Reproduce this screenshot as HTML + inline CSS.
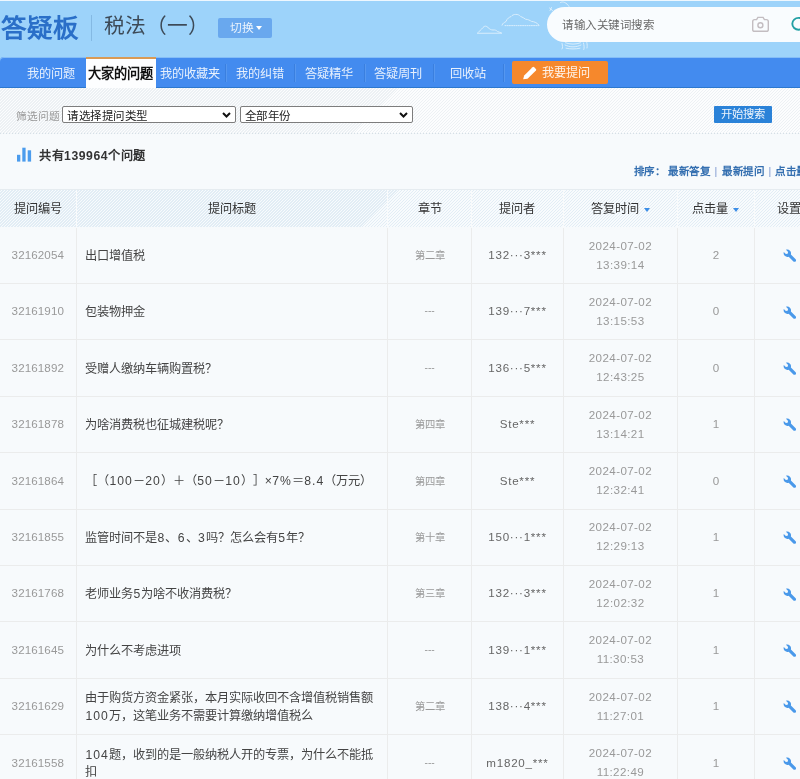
<!DOCTYPE html>
<html lang="zh-CN">
<head>
<meta charset="utf-8">
<title>答疑板</title>
<style>
*{box-sizing:border-box;margin:0;padding:0}
html,body{width:800px;height:779px;overflow:hidden}
#wrap{position:absolute;left:0;top:0;width:800px;height:779px;overflow:hidden;will-change:transform}
body{text-spacing-trim:space-all;font-family:"Liberation Sans",sans-serif;background:#f7fafc;color:#333;position:relative;font-size:12.2px}
#top{position:absolute;left:0;top:0;width:800px;height:70px;background:#9dd3fa;border-top:1px solid #eef7fe}
#logo{position:absolute;left:0.5px;top:10px;font-size:25.5px;font-weight:bold;color:#2a6fc8;line-height:34px;white-space:nowrap;letter-spacing:0}
#sep{position:absolute;left:91px;top:14px;width:1px;height:26px;background:#84b9e3}
#course{position:absolute;left:103.5px;top:9px;font-size:20.7px;color:#3d4a57;line-height:32px;white-space:nowrap}
#sw{position:absolute;left:217.5px;top:17px;width:54px;height:19.6px;background:#69a8ee;border-radius:2px;color:rgba(255,255,255,.86);font-size:11.8px;line-height:20px;text-align:left;padding-left:12px;white-space:nowrap}
#sw i{position:absolute;left:38.5px;top:8px;border:3.5px solid transparent;border-top:4px solid #fff;border-bottom:0}
#search{position:absolute;left:547px;top:6px;width:300px;height:35px;border-radius:17.5px;background:#f9fcfe}
#search span{position:absolute;left:15.3px;top:2px;line-height:33px;font-size:11.5px;letter-spacing:.5px;color:#6a6a6a;white-space:nowrap}
#nav{position:absolute;left:0;top:57px;width:800px;height:31px;background:#438bef;border-bottom:1px solid #2c78cf;border-top-left-radius:4px;box-shadow:inset 0 1px 0 #84bdf7}
#nav .t{position:absolute;top:0;height:30px;line-height:35px;color:rgba(255,255,255,.88);font-size:12.2px;text-align:center;white-space:nowrap}
#nav .sp{position:absolute;top:7px;width:1px;height:18px;background:#3a7fdf;box-shadow:1px 0 0 #5597f0}
#nav .act{position:absolute;left:86.4px;top:0;width:69.6px;height:32px;background:#fdfeff;border-top:2px solid #d99a55;color:#111;font-weight:bold;font-size:13.2px;line-height:30px;text-align:center;text-indent:-2px;white-space:nowrap}
#ask{position:absolute;left:512px;top:4px;width:96px;height:23px;background:#f6882c;border-radius:2px;color:rgba(255,255,255,.9);font-size:12.2px;line-height:25px;white-space:nowrap}
#ask span{position:absolute;left:30px;top:0}
#filter{position:absolute;left:0;top:88px;width:800px;height:46px;background:repeating-linear-gradient(135deg,#edf1f4 0,#edf1f4 .75px,#fcfdfe .75px,#fcfdfe 2.121px)}
#filter:after{content:"";position:absolute;left:0;bottom:0;width:800px;height:1px;background:repeating-linear-gradient(90deg,#d5dfe6 0,#d5dfe6 1.5px,#f4f7f9 1.5px,#f4f7f9 3px)}
#filter .lb{position:absolute;left:16px;top:21px;font-size:10.7px;color:#999;line-height:14px;white-space:nowrap}
.sel{position:absolute;top:18.4px;height:17px;border:1px solid #7d7d7d;border-radius:2px;background:#fff;font-size:11.5px;letter-spacing:.5px;line-height:15px;padding-top:2px;color:#222;padding-left:4px;white-space:nowrap}
.sel svg{position:absolute;right:4px;top:5px}
#go{position:absolute;left:713.6px;top:18.3px;width:58.6px;height:17px;background:#2a82d8;color:rgba(255,255,255,.92);font-size:11.3px;line-height:17.5px;text-align:center;border-radius:1px;white-space:nowrap}
#cnt{position:absolute;left:39px;top:148px;font-size:12.2px;font-weight:bold;color:#333;line-height:16px;white-space:nowrap;letter-spacing:.55px}
#bars{position:absolute;left:16.8px;top:146.8px}
#sort{position:absolute;left:0;top:164px;font-size:10.5px;letter-spacing:.6px;color:#346fb0;line-height:14px;white-space:nowrap;font-weight:bold}
#sort span{position:absolute;top:0}
#thead{position:absolute;left:0;top:189px;width:800px;height:38.4px;border-top:1px solid #e6ecf0;
 background:repeating-linear-gradient(135deg,#e2edf5 0,#e2edf5 .75px,#f8fbfd .75px,#f8fbfd 2.121px)}
#thead .h{position:absolute;top:0;height:37.4px;line-height:38px;text-align:center;font-size:12.2px;color:#333;border-right:1px solid #f9fbfc;white-space:nowrap}
#thead .h.last{text-align:left;padding-left:22.5px;border-right:0}
.ar{display:inline-block;margin-left:5px;vertical-align:1px;border:3px solid transparent;border-top:4px solid #3b8de6;border-bottom:0}
.row{position:absolute;left:0;width:800px;border-bottom:1px solid #ebecec}
.c{position:absolute;top:0;height:100%;padding-bottom:1.6px;display:flex;align-items:center;justify-content:center;border-right:1px solid #ebecec;text-align:center}
.c.id{color:#999;font-size:11.6px;letter-spacing:.1px}
.c.ti{justify-content:flex-start;text-align:left;padding-left:8.5px;padding-top:4px;color:#444;font-size:12.2px;line-height:17.4px}
.n{font-weight:normal;letter-spacing:.95px;margin-left:.5px}
.c.ch{color:#999;font-size:10.3px}
.c.us{color:#666;font-size:11.6px;letter-spacing:.75px}
.c.dt{color:#999;font-size:11.6px;line-height:19px;letter-spacing:.4px}
.c.ck{color:#999;font-size:11.6px}
.c.st{border-right:0;justify-content:flex-start;padding-left:28px;padding-top:3px}
.wr{transform:scaleX(-1)}
</style>
</head>
<body>
<div id="wrap">
<div id="top">
  <div id="logo">答疑板</div>
  <div id="sep"></div>
  <div id="course">税法（一）</div>
  <div id="sw">切换<i></i></div>
  <svg style="position:absolute;left:0;top:-1px" width="800" height="58" viewBox="0 0 800 58" fill="none" stroke="#d9eefd" stroke-width="1" stroke-linecap="round"><path d="M477.5 33 C479 31.5 481 30 483 27.5 C484.5 25.6 486.5 25.8 488 27.5 C489.5 29 491 30 493 30 C495 29.6 496.5 30.5 497.5 31.5 C499 32.2 500.5 32.4 501.5 33 Z"/><path d="M502 25.2 C502.5 23 504.5 22.5 506 21.5 C507 18.5 509.5 17 511 16.6 C513 13.8 518.5 13.6 520.5 16.4 C522.5 17.2 524 18 525.5 19.2 C528 19.4 530 20.4 531.5 21.4 C534.5 21.6 537.5 23 539 25.2"/><path d="M505 25.6 H538.5" stroke-dasharray="1 1.2"/><path d="M560.5 2.5 C563 1 566.5 2.5 569 6.5 M549.5 8 L552.5 10.5 M551.5 7.5 L550 10.5"/><path d="M562 43.5 C562.5 46 563 47.5 562 49 M565 45 C570 47.5 576 47.5 581 45 M565.5 42.8 C570 44.6 576 44.6 580.5 42.8 M566 48.2 C570 49.2 576 49.2 580 48.2 M583.5 43 C584 45.5 584.5 47.5 583.8 49.5 M586.8 42.5 C587.2 44.5 587.4 46 587 48"/></svg>
  <div id="search"><span>请输入关键词搜索</span>
    <svg style="position:absolute;left:0;top:0" width="253" height="35" viewBox="0 0 253 35" fill="none"><path d="M207.6 12.6 H209.6 L210.9 10.4 H216.1 L217.4 12.6 H219.4 Q221.3 12.6 221.3 14.5 V22.4 Q221.3 24.3 219.4 24.3 H207.6 Q205.7 24.3 205.7 22.4 V14.5 Q205.7 12.6 207.6 12.6 Z" stroke="#c3bdc1" stroke-width="1.4"/><circle cx="213.4" cy="18.2" r="2.5" stroke="#c3bdc1" stroke-width="1.4"/><ellipse cx="251.6" cy="16.8" rx="6.3" ry="5.9" stroke="#22a0a4" stroke-width="1.9"/></svg>
  </div>
</div>
<div id="nav">
  <div class="t" style="left:27px;width:48px">我的问题</div>
  <div class="act">大家的问题</div>
  <div class="t" style="left:160px;width:60px">我的收藏夹</div>
  <div class="sp" style="left:225px"></div>
  <div class="t" style="left:236px;width:48px">我的纠错</div>
  <div class="sp" style="left:294px"></div>
  <div class="t" style="left:305px;width:48px">答疑精华</div>
  <div class="sp" style="left:364px"></div>
  <div class="t" style="left:374px;width:48px">答疑周刊</div>
  <div class="sp" style="left:433px"></div>
  <div class="t" style="left:450px;width:36px">回收站</div>
  <div class="sp" style="left:503px"></div>
  <div id="ask"><svg style="position:absolute;left:10px;top:4.5px" width="15.5" height="14.5" viewBox="0 0 14 13"><path d="M1 12 L2 8.5 L9.5 1 Q10.2 .4 10.9 1 L12.6 2.7 Q13.2 3.4 12.6 4 L5 11.5 Z" fill="#fff"/></svg><span>我要提问</span></div>
</div>
<div id="filter">
  <div class="lb">筛选问题</div>
  <div class="sel" style="left:62px;width:173.6px">请选择提问类型<svg width="9" height="6" viewBox="0 0 9 6"><path d="M1 1 L4.5 4.5 L8 1" fill="none" stroke="#111" stroke-width="2"/></svg></div>
  <div class="sel" style="left:239.6px;width:173.6px">全部年份<svg width="9" height="6" viewBox="0 0 9 6"><path d="M1 1 L4.5 4.5 L8 1" fill="none" stroke="#111" stroke-width="2"/></svg></div>
  <div id="go">开始搜索</div>
</div>
<svg id="bars" width="15" height="15" viewBox="0 0 15 15"><rect x="0" y="7.8" width="3.3" height="6.8" fill="#4b9ced"/><rect x="5.3" y="0.7" width="3.3" height="13.9" fill="#4b9ced"/><rect x="10.7" y="3.3" width="3.4" height="11.3" fill="#4b9ced"/></svg>
<div id="cnt">共有139964个问题</div>
<div id="sort"><span style="left:633.5px">排序：</span><span style="left:668px">最新答复</span><span style="left:714.5px;font-weight:normal;color:#7d98cf">|</span><span style="left:722px">最新提问</span><span style="left:768.5px;font-weight:normal;color:#7d98cf">|</span><span style="left:775px">点击量</span></div>
<div id="thead">
<div class="h" style="left:0.0px;width:76.6px"><span>提问编号</span></div>
<div class="h" style="left:76.6px;width:311.4px"><span>提问标题</span></div>
<div class="h" style="left:388.0px;width:84.3px"><span>章节</span></div>
<div class="h" style="left:472.3px;width:91.3px"><span>提问者</span></div>
<div class="h" style="left:563.6px;width:114.6px"><span>答复时间<i class="ar"></i></span></div>
<div class="h" style="left:678.2px;width:76.6px"><span>点击量<i class="ar"></i></span></div>
<div class="h last" style="left:754.8px;width:85.2px"><span>设置</span></div>
</div>
<div class="row" style="top:227.70px;height:56.38px">
<div class="c id" style="left:0.0px;width:76.6px"><span>32162054</span></div>
<div class="c ti" style="left:76.6px;width:311.4px"><span>出口增值税</span></div>
<div class="c ch" style="left:388.0px;width:84.3px"><span>第二章</span></div>
<div class="c us" style="left:472.3px;width:91.3px"><span>132···3***</span></div>
<div class="c dt" style="left:563.6px;width:114.6px"><span>2024-07-02<br>13:39:14</span></div>
<div class="c ck" style="left:678.2px;width:76.6px"><span>2</span></div>
<div class="c st" style="left:754.8px;width:85.2px"><svg class="wr" viewBox="0 0 14 14" width="13.5" height="13.5"><path d="M13.2 3.1 L11 5.3 L9.2 4.8 L8.7 3 L10.9 0.8 C9.5 0.3 7.9 0.6 6.8 1.7 C5.7 2.8 5.4 4.3 5.8 5.7 L0.9 10.6 C0.3 11.2 0.3 12.3 0.9 12.9 C1.5 13.5 2.6 13.5 3.2 12.9 L8.1 8 C9.5 8.5 11.1 8.2 12.2 7.1 C13.3 6 13.6 4.5 13.2 3.1 Z" fill="#4a99ea"/></svg></div>
</div>
<div class="row" style="top:284.08px;height:56.38px">
<div class="c id" style="left:0.0px;width:76.6px"><span>32161910</span></div>
<div class="c ti" style="left:76.6px;width:311.4px"><span>包装物押金</span></div>
<div class="c ch" style="left:388.0px;width:84.3px"><span>---</span></div>
<div class="c us" style="left:472.3px;width:91.3px"><span>139···7***</span></div>
<div class="c dt" style="left:563.6px;width:114.6px"><span>2024-07-02<br>13:15:53</span></div>
<div class="c ck" style="left:678.2px;width:76.6px"><span>0</span></div>
<div class="c st" style="left:754.8px;width:85.2px"><svg class="wr" viewBox="0 0 14 14" width="13.5" height="13.5"><path d="M13.2 3.1 L11 5.3 L9.2 4.8 L8.7 3 L10.9 0.8 C9.5 0.3 7.9 0.6 6.8 1.7 C5.7 2.8 5.4 4.3 5.8 5.7 L0.9 10.6 C0.3 11.2 0.3 12.3 0.9 12.9 C1.5 13.5 2.6 13.5 3.2 12.9 L8.1 8 C9.5 8.5 11.1 8.2 12.2 7.1 C13.3 6 13.6 4.5 13.2 3.1 Z" fill="#4a99ea"/></svg></div>
</div>
<div class="row" style="top:340.46px;height:56.38px">
<div class="c id" style="left:0.0px;width:76.6px"><span>32161892</span></div>
<div class="c ti" style="left:76.6px;width:311.4px"><span>受赠人缴纳车辆购置税？</span></div>
<div class="c ch" style="left:388.0px;width:84.3px"><span>---</span></div>
<div class="c us" style="left:472.3px;width:91.3px"><span>136···5***</span></div>
<div class="c dt" style="left:563.6px;width:114.6px"><span>2024-07-02<br>12:43:25</span></div>
<div class="c ck" style="left:678.2px;width:76.6px"><span>0</span></div>
<div class="c st" style="left:754.8px;width:85.2px"><svg class="wr" viewBox="0 0 14 14" width="13.5" height="13.5"><path d="M13.2 3.1 L11 5.3 L9.2 4.8 L8.7 3 L10.9 0.8 C9.5 0.3 7.9 0.6 6.8 1.7 C5.7 2.8 5.4 4.3 5.8 5.7 L0.9 10.6 C0.3 11.2 0.3 12.3 0.9 12.9 C1.5 13.5 2.6 13.5 3.2 12.9 L8.1 8 C9.5 8.5 11.1 8.2 12.2 7.1 C13.3 6 13.6 4.5 13.2 3.1 Z" fill="#4a99ea"/></svg></div>
</div>
<div class="row" style="top:396.84px;height:56.38px">
<div class="c id" style="left:0.0px;width:76.6px"><span>32161878</span></div>
<div class="c ti" style="left:76.6px;width:311.4px"><span>为啥消费税也征城建税呢？</span></div>
<div class="c ch" style="left:388.0px;width:84.3px"><span>第四章</span></div>
<div class="c us" style="left:472.3px;width:91.3px"><span>Ste***</span></div>
<div class="c dt" style="left:563.6px;width:114.6px"><span>2024-07-02<br>13:14:21</span></div>
<div class="c ck" style="left:678.2px;width:76.6px"><span>1</span></div>
<div class="c st" style="left:754.8px;width:85.2px"><svg class="wr" viewBox="0 0 14 14" width="13.5" height="13.5"><path d="M13.2 3.1 L11 5.3 L9.2 4.8 L8.7 3 L10.9 0.8 C9.5 0.3 7.9 0.6 6.8 1.7 C5.7 2.8 5.4 4.3 5.8 5.7 L0.9 10.6 C0.3 11.2 0.3 12.3 0.9 12.9 C1.5 13.5 2.6 13.5 3.2 12.9 L8.1 8 C9.5 8.5 11.1 8.2 12.2 7.1 C13.3 6 13.6 4.5 13.2 3.1 Z" fill="#4a99ea"/></svg></div>
</div>
<div class="row" style="top:453.22px;height:56.38px">
<div class="c id" style="left:0.0px;width:76.6px"><span>32161864</span></div>
<div class="c ti" style="left:76.6px;width:311.4px"><span>［（<b class="n">100</b>－<b class="n">20</b>）＋（<b class="n">50</b>－<b class="n">10</b>）］×<b class="n">7%</b>＝<b class="n">8.4</b>（万元）</span></div>
<div class="c ch" style="left:388.0px;width:84.3px"><span>第四章</span></div>
<div class="c us" style="left:472.3px;width:91.3px"><span>Ste***</span></div>
<div class="c dt" style="left:563.6px;width:114.6px"><span>2024-07-02<br>12:32:41</span></div>
<div class="c ck" style="left:678.2px;width:76.6px"><span>0</span></div>
<div class="c st" style="left:754.8px;width:85.2px"><svg class="wr" viewBox="0 0 14 14" width="13.5" height="13.5"><path d="M13.2 3.1 L11 5.3 L9.2 4.8 L8.7 3 L10.9 0.8 C9.5 0.3 7.9 0.6 6.8 1.7 C5.7 2.8 5.4 4.3 5.8 5.7 L0.9 10.6 C0.3 11.2 0.3 12.3 0.9 12.9 C1.5 13.5 2.6 13.5 3.2 12.9 L8.1 8 C9.5 8.5 11.1 8.2 12.2 7.1 C13.3 6 13.6 4.5 13.2 3.1 Z" fill="#4a99ea"/></svg></div>
</div>
<div class="row" style="top:509.60px;height:56.38px">
<div class="c id" style="left:0.0px;width:76.6px"><span>32161855</span></div>
<div class="c ti" style="left:76.6px;width:311.4px"><span>监管时间不是<b class="n">8</b>、<b class="n">6</b>、<b class="n">3</b>吗？怎么会有<b class="n">5</b>年？</span></div>
<div class="c ch" style="left:388.0px;width:84.3px"><span>第十章</span></div>
<div class="c us" style="left:472.3px;width:91.3px"><span>150···1***</span></div>
<div class="c dt" style="left:563.6px;width:114.6px"><span>2024-07-02<br>12:29:13</span></div>
<div class="c ck" style="left:678.2px;width:76.6px"><span>1</span></div>
<div class="c st" style="left:754.8px;width:85.2px"><svg class="wr" viewBox="0 0 14 14" width="13.5" height="13.5"><path d="M13.2 3.1 L11 5.3 L9.2 4.8 L8.7 3 L10.9 0.8 C9.5 0.3 7.9 0.6 6.8 1.7 C5.7 2.8 5.4 4.3 5.8 5.7 L0.9 10.6 C0.3 11.2 0.3 12.3 0.9 12.9 C1.5 13.5 2.6 13.5 3.2 12.9 L8.1 8 C9.5 8.5 11.1 8.2 12.2 7.1 C13.3 6 13.6 4.5 13.2 3.1 Z" fill="#4a99ea"/></svg></div>
</div>
<div class="row" style="top:565.98px;height:56.38px">
<div class="c id" style="left:0.0px;width:76.6px"><span>32161768</span></div>
<div class="c ti" style="left:76.6px;width:311.4px"><span>老师业务<b class="n">5</b>为啥不收消费税？</span></div>
<div class="c ch" style="left:388.0px;width:84.3px"><span>第三章</span></div>
<div class="c us" style="left:472.3px;width:91.3px"><span>132···3***</span></div>
<div class="c dt" style="left:563.6px;width:114.6px"><span>2024-07-02<br>12:02:32</span></div>
<div class="c ck" style="left:678.2px;width:76.6px"><span>1</span></div>
<div class="c st" style="left:754.8px;width:85.2px"><svg class="wr" viewBox="0 0 14 14" width="13.5" height="13.5"><path d="M13.2 3.1 L11 5.3 L9.2 4.8 L8.7 3 L10.9 0.8 C9.5 0.3 7.9 0.6 6.8 1.7 C5.7 2.8 5.4 4.3 5.8 5.7 L0.9 10.6 C0.3 11.2 0.3 12.3 0.9 12.9 C1.5 13.5 2.6 13.5 3.2 12.9 L8.1 8 C9.5 8.5 11.1 8.2 12.2 7.1 C13.3 6 13.6 4.5 13.2 3.1 Z" fill="#4a99ea"/></svg></div>
</div>
<div class="row" style="top:622.36px;height:56.38px">
<div class="c id" style="left:0.0px;width:76.6px"><span>32161645</span></div>
<div class="c ti" style="left:76.6px;width:311.4px"><span>为什么不考虑进项</span></div>
<div class="c ch" style="left:388.0px;width:84.3px"><span>---</span></div>
<div class="c us" style="left:472.3px;width:91.3px"><span>139···1***</span></div>
<div class="c dt" style="left:563.6px;width:114.6px"><span>2024-07-02<br>11:30:53</span></div>
<div class="c ck" style="left:678.2px;width:76.6px"><span>1</span></div>
<div class="c st" style="left:754.8px;width:85.2px"><svg class="wr" viewBox="0 0 14 14" width="13.5" height="13.5"><path d="M13.2 3.1 L11 5.3 L9.2 4.8 L8.7 3 L10.9 0.8 C9.5 0.3 7.9 0.6 6.8 1.7 C5.7 2.8 5.4 4.3 5.8 5.7 L0.9 10.6 C0.3 11.2 0.3 12.3 0.9 12.9 C1.5 13.5 2.6 13.5 3.2 12.9 L8.1 8 C9.5 8.5 11.1 8.2 12.2 7.1 C13.3 6 13.6 4.5 13.2 3.1 Z" fill="#4a99ea"/></svg></div>
</div>
<div class="row" style="top:678.74px;height:56.38px">
<div class="c id" style="left:0.0px;width:76.6px"><span>32161629</span></div>
<div class="c ti" style="left:76.6px;width:311.4px"><span>由于购货方资金紧张，本月实际收回不含增值税销售额<br><b class="n">100</b>万，这笔业务不需要计算缴纳增值税么</span></div>
<div class="c ch" style="left:388.0px;width:84.3px"><span>第二章</span></div>
<div class="c us" style="left:472.3px;width:91.3px"><span>138···4***</span></div>
<div class="c dt" style="left:563.6px;width:114.6px"><span>2024-07-02<br>11:27:01</span></div>
<div class="c ck" style="left:678.2px;width:76.6px"><span>1</span></div>
<div class="c st" style="left:754.8px;width:85.2px"><svg class="wr" viewBox="0 0 14 14" width="13.5" height="13.5"><path d="M13.2 3.1 L11 5.3 L9.2 4.8 L8.7 3 L10.9 0.8 C9.5 0.3 7.9 0.6 6.8 1.7 C5.7 2.8 5.4 4.3 5.8 5.7 L0.9 10.6 C0.3 11.2 0.3 12.3 0.9 12.9 C1.5 13.5 2.6 13.5 3.2 12.9 L8.1 8 C9.5 8.5 11.1 8.2 12.2 7.1 C13.3 6 13.6 4.5 13.2 3.1 Z" fill="#4a99ea"/></svg></div>
</div>
<div class="row" style="top:735.12px;height:56.38px">
<div class="c id" style="left:0.0px;width:76.6px"><span>32161558</span></div>
<div class="c ti" style="left:76.6px;width:311.4px"><span><b class="n">104</b>题，收到的是一般纳税人开的专票，为什么不能抵<br>扣</span></div>
<div class="c ch" style="left:388.0px;width:84.3px"><span>---</span></div>
<div class="c us" style="left:472.3px;width:91.3px"><span>m1820_***</span></div>
<div class="c dt" style="left:563.6px;width:114.6px"><span>2024-07-02<br>11:22:49</span></div>
<div class="c ck" style="left:678.2px;width:76.6px"><span>1</span></div>
<div class="c st" style="left:754.8px;width:85.2px"><svg class="wr" viewBox="0 0 14 14" width="13.5" height="13.5"><path d="M13.2 3.1 L11 5.3 L9.2 4.8 L8.7 3 L10.9 0.8 C9.5 0.3 7.9 0.6 6.8 1.7 C5.7 2.8 5.4 4.3 5.8 5.7 L0.9 10.6 C0.3 11.2 0.3 12.3 0.9 12.9 C1.5 13.5 2.6 13.5 3.2 12.9 L8.1 8 C9.5 8.5 11.1 8.2 12.2 7.1 C13.3 6 13.6 4.5 13.2 3.1 Z" fill="#4a99ea"/></svg></div>
</div>
</div>
</body>
</html>
